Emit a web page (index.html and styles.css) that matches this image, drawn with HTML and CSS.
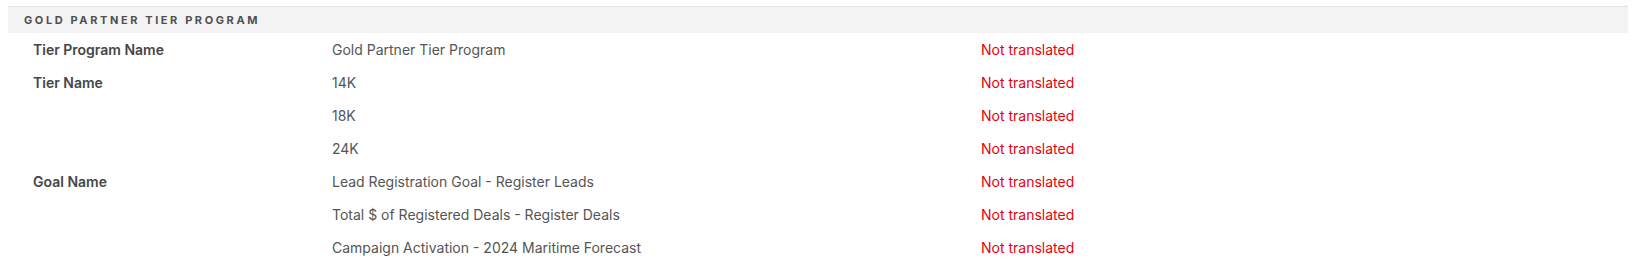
FILE: index.html
```html
<!DOCTYPE html>
<html lang="en">
<head>
    <meta charset="UTF-8">
    <meta name="viewport" content="width=device-width, initial-scale=1.0">
    <title>Gold Partner Tier Program</title>
    <link rel="stylesheet" href="styles.css">
</head>
<body>
    <section class="panel">
        <h2 class="panel-title">Gold Partner Tier Program</h2>
        <div class="translations">
            <div class="label">Tier Program Name</div>
            <div class="value">Gold Partner Tier Program</div>
            <div class="missing">Not translated</div>

            <div class="label">Tier Name</div>
            <div class="value">14K</div>
            <div class="missing">Not translated</div>

            <div class="label"></div>
            <div class="value">18K</div>
            <div class="missing">Not translated</div>

            <div class="label"></div>
            <div class="value">24K</div>
            <div class="missing">Not translated</div>

            <div class="label">Goal Name</div>
            <div class="value">Lead Registration Goal - Register Leads</div>
            <div class="missing">Not translated</div>

            <div class="label"></div>
            <div class="value">Total $ of Registered Deals - Register Deals</div>
            <div class="missing">Not translated</div>

            <div class="label"></div>
            <div class="value">Campaign Activation - 2024 Maritime Forecast</div>
            <div class="missing">Not translated</div>
        </div>
    </section>
</body>
</html>
```

FILE: styles.css
```css
body {
    margin: 0;
    background: #fff;
    font-family: Inter, "Noto Sans", sans-serif;
}
.panel {
    margin: 6px 12px 0 8px;
}
.panel-title {
    margin: 0;
    height: 26px;
    line-height: 26px;
    padding-left: 16px;
    background: #f3f3f3;
    border-top: 1px solid #e2e2e2;
    font-size: 11px;
    font-weight: 700;
    letter-spacing: 2.6px;
    text-transform: uppercase;
    color: #505050;
}
.translations {
    display: grid;
    grid-template-columns: 324px 649px 1fr;
    grid-auto-rows: 33px;
    align-items: center;
    font-size: 14px;
}
.label {
    padding-left: 25px;
    font-weight: 600;
    color: #464646;
}
.value {
    color: #555;
}
.missing {
    color: #e8000d;
}
```
